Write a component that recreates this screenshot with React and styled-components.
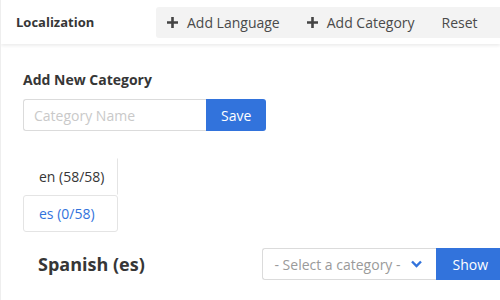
import React from 'react';
import styled, { createGlobalStyle } from 'styled-components';

const GlobalStyle = createGlobalStyle`
  html, body {
    margin: 0;
    padding: 0;
    background: #fff;
    overflow: hidden;
  }
  body {
    font-family: 'Open Sans', 'Liberation Sans', sans-serif;
    color: #363636;
  }
`;

const Page = styled.div`
  width: 500px;
  height: 300px;
  border-left: 1px solid #eeeeee;
  box-sizing: border-box;
  overflow: hidden;
`;

const Header = styled.header`
  height: 44px;
  display: flex;
  align-items: center;
  background: #fff;
  box-shadow: 0 2px 3px rgba(0, 0, 0, 0.07);
`;

const Title = styled.div`
  width: 140px;
  padding-left: 15px;
  font-size: 13px;
  font-weight: 700;
  color: #363636;
`;

const Toolbar = styled.nav`
  flex: 1;
  height: 31px;
  display: flex;
  align-items: center;
  gap: 5px;
  background: #f3f3f3;
  border-radius: 3px 0 0 3px;
`;

const ToolButton = styled.button`
  display: flex;
  align-items: center;
  gap: 9px;
  height: 100%;
  padding: 0 11px;
  border: none;
  background: none;
  font-family: inherit;
  font-size: 14px;
  color: #4a4a4a;
  cursor: pointer;
  white-space: nowrap;
`;

const Main = styled.main`
  padding: 26px 0 0 22px;
`;

const SectionTitle = styled.h3`
  margin: 0 0 10px;
  font-size: 14px;
  font-weight: 700;
  color: #363636;
  line-height: 19px;
`;

const FieldRow = styled.div`
  display: flex;
  height: 32px;
`;

const TextInput = styled.input`
  width: 183px;
  box-sizing: border-box;
  height: 100%;
  padding: 0 10px;
  border: 1px solid #dbdbdb;
  border-right: none;
  border-radius: 3px 0 0 3px;
  font-family: inherit;
  font-size: 14px;
  color: #363636;
  outline: none;
  &::placeholder {
    color: #c9c9c9;
  }
`;

const BlueButton = styled.button`
  height: 100%;
  padding: 0 ${({ pad }) => pad || 15}px;
  border: none;
  border-radius: ${({ square }) => (square ? '0' : '0 3px 3px 0')};
  background: #3273dc;
  color: #fff;
  font-family: inherit;
  font-size: 14px;
  cursor: pointer;
`;

const Tabs = styled.ul`
  list-style: none;
  margin: 27px 0 0;
  padding: 0;
  width: 95px;
`;

const Tab = styled.li`
  height: 37px;
  box-sizing: border-box;
  display: flex;
  align-items: center;
  padding-left: 15px;
  font-size: 14px;
  color: ${({ active }) => (active ? '#3273dc' : '#363636')};
  border: 1px solid ${({ active }) => (active ? '#e4e4e4' : 'transparent')};
  border-right-color: #e4e4e4;
  border-radius: ${({ active }) => (active ? '3px' : '0')};
`;

const LangRow = styled.div`
  display: flex;
  align-items: center;
  justify-content: space-between;
  margin-top: 16px;
  margin-right: -4px;
  padding-left: 15px;
`;

const LangTitle = styled.h2`
  margin: 0;
  font-size: 18px;
  font-weight: 700;
  color: #363636;
`;

const SelectGroup = styled.div`
  display: flex;
  height: 32px;
`;

const Select = styled.div`
  width: 174px;
  box-sizing: border-box;
  display: flex;
  align-items: center;
  justify-content: space-between;
  padding: 0 14px 0 11px;
  border: 1px solid #dbdbdb;
  border-right: none;
  border-radius: 3px 0 0 3px;
  font-size: 14px;
  color: #9a9a9a;
  white-space: nowrap;
`;

const Plus = () => (
  <svg width="11" height="11" viewBox="0 0 11 11">
    <path d="M5.5 0v11M0 5.5h11" stroke="#444" strokeWidth="2.6" />
  </svg>
);

const Chevron = () => (
  <svg width="11" height="8" viewBox="0 0 11 8">
    <path d="M1 1.5l4.5 4.5 4.5-4.5" fill="none" stroke="#3273dc" strokeWidth="2.4" />
  </svg>
);

export default function App() {
  return (
    <>
      <GlobalStyle />
      <Page>
        <Header>
          <Title>Localization</Title>
          <Toolbar>
            <ToolButton>
              <Plus />
              Add Language
            </ToolButton>
            <ToolButton>
              <Plus />
              Add Category
            </ToolButton>
            <ToolButton>Reset</ToolButton>
          </Toolbar>
        </Header>
        <Main>
          <SectionTitle>Add New Category</SectionTitle>
          <FieldRow>
            <TextInput placeholder="Category Name" />
            <BlueButton>Save</BlueButton>
          </FieldRow>
          <Tabs>
            <Tab>en (58/58)</Tab>
            <Tab active>es (0/58)</Tab>
          </Tabs>
          <LangRow>
            <LangTitle>Spanish (es)</LangTitle>
            <SelectGroup>
              <Select>
                - Select a category -
                <Chevron />
              </Select>
              <BlueButton square pad={16}>
                Show
              </BlueButton>
            </SelectGroup>
          </LangRow>
        </Main>
      </Page>
    </>
  );
}
